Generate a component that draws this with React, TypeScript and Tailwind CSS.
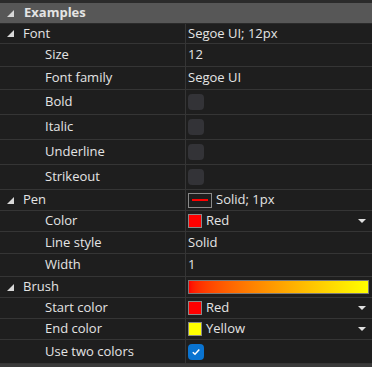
import type { ReactNode } from "react";

type Row =
  | { kind: "cat"; label: string; h: number; value?: ReactNode }
  | { kind: "prop"; label: string; h: number; value?: ReactNode };

function Arrow() {
  return (
    <svg width="7" height="7" viewBox="0 0 7 7" className="shrink-0">
      <polygon points="7,0 7,7 0,7" fill="#d8d8d8" />
    </svg>
  );
}

function Check({ on }: { on?: boolean }) {
  if (on)
    return (
      <div className="flex h-4 w-4 items-center justify-center rounded-[4px] bg-[#0a74d1]">
        <svg width="10" height="10" viewBox="0 0 10 10">
          <path d="M1.8 5.2 L4 7.3 L8.3 2.6" stroke="#fff" strokeWidth="1.5" fill="none" />
        </svg>
      </div>
    );
  return <div className="h-4 w-4 rounded-[4px] bg-[#333337]" />;
}

function Swatch({ color, label }: { color: string; label: string }) {
  return (
    <div className="flex flex-1 items-center">
      <div className="h-[14px] w-[14px] border border-[#8a8a8a]" style={{ background: color }} />
      <span className="ml-[4px] flex-1">{label}</span>
      <svg width="8" height="5" viewBox="0 0 8 5" className="mr-[6px]">
        <polygon points="0,0 8,0 4,4" fill="#e0e0e0" />
      </svg>
    </div>
  );
}

const rows: Row[] = [
  { kind: "cat", label: "Font", h: 20, value: "Segoe UI; 12px" },
  { kind: "prop", label: "Size", h: 23, value: "12" },
  { kind: "prop", label: "Font family", h: 23, value: "Segoe UI" },
  { kind: "prop", label: "Bold", h: 25, value: <Check /> },
  { kind: "prop", label: "Italic", h: 25, value: <Check /> },
  { kind: "prop", label: "Underline", h: 25, value: <Check /> },
  { kind: "prop", label: "Strikeout", h: 25, value: <Check /> },
  {
    kind: "cat",
    label: "Pen",
    h: 21,
    value: (
      <div className="flex items-center">
        <div className="flex h-[15px] w-[24px] items-center justify-center border border-[#8a8a8a]">
          <div className="h-[2px] w-[16px] bg-[#ff0000]" />
        </div>
        <span className="ml-[4px]">Solid; 1px</span>
      </div>
    ),
  },
  { kind: "prop", label: "Color", h: 21, value: <Swatch color="#ff0000" label="Red" /> },
  { kind: "prop", label: "Line style", h: 22, value: "Solid" },
  { kind: "prop", label: "Width", h: 23, value: "1" },
  {
    kind: "cat",
    label: "Brush",
    h: 21,
    value: (
      <div className="mr-[3px] h-[14px] flex-1 border border-[#7a7a7a] bg-gradient-to-r from-[#ff0000] to-[#ffff00]" />
    ),
  },
  { kind: "prop", label: "Start color", h: 21, value: <Swatch color="#ff0000" label="Red" /> },
  { kind: "prop", label: "End color", h: 21, value: <Swatch color="#ffff00" label="Yellow" /> },
  { kind: "prop", label: "Use two colors", h: 24, value: <Check on /> },
];

export default function App() {
  return (
    <div
      className="flex h-[367px] w-[372px] flex-col bg-[#1e1e1e] text-[13px] text-[#e4e4e4]"
      style={{ fontFamily: '"Open Sans", "Noto Sans", sans-serif' }}
    >
      <div className="h-[3px] bg-[#2b2b2b]" />
      <div className="flex h-[21px] items-center border-b border-[#2a2a2a] bg-[#575757] pl-[7px]">
        <Arrow />
        <span className="ml-[10px] font-bold">Examples</span>
      </div>
      {rows.map((r) => (
        <div
          key={r.label}
          className="grid grid-cols-[186px_1fr] border-b border-[#353535]"
          style={{ height: r.h }}
        >
          <div className="flex items-center border-r border-[#353535]">
            {r.kind === "cat" ? (
              <div className="flex items-center pl-[7px]">
                <Arrow />
                <span className="ml-[9px]">{r.label}</span>
              </div>
            ) : (
              <span className="pl-[45px]">{r.label}</span>
            )}
          </div>
          <div className="flex items-center pl-[2px]">{r.value}</div>
        </div>
      ))}
      <div className="flex-1 bg-[#3a3a3a]" />
    </div>
  );
}
